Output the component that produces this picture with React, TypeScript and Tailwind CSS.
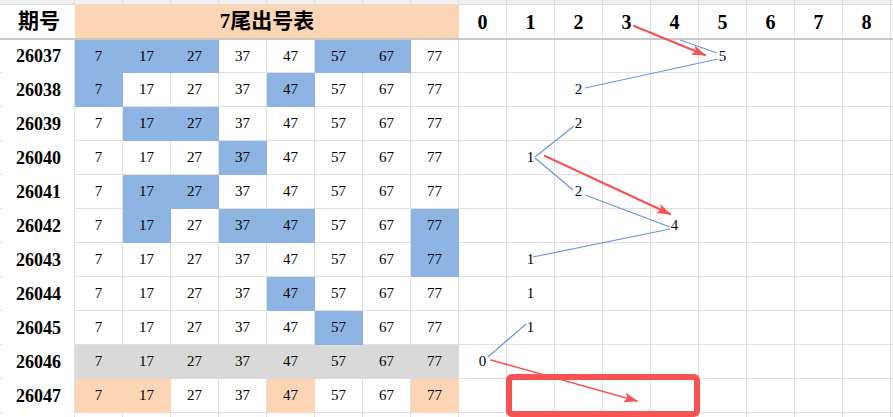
import React from 'react';

type Fill = 'blue' | 'gray' | 'orange';

interface DrawRow {
    id: string;
    hits: number[];
    fill: Fill;
    value: number | null;
}

const tails = ['7', '17', '27', '37', '47', '57', '67', '77'];
const digits = [0, 1, 2, 3, 4, 5, 6, 7, 8];

const rows: DrawRow[] = [
    { id: '26037', hits: [0, 1, 2, 5, 6], fill: 'blue', value: 5 },
    { id: '26038', hits: [0, 4], fill: 'blue', value: 2 },
    { id: '26039', hits: [1, 2], fill: 'blue', value: 2 },
    { id: '26040', hits: [3], fill: 'blue', value: 1 },
    { id: '26041', hits: [1, 2], fill: 'blue', value: 2 },
    { id: '26042', hits: [1, 3, 4, 7], fill: 'blue', value: 4 },
    { id: '26043', hits: [7], fill: 'blue', value: 1 },
    { id: '26044', hits: [4], fill: 'blue', value: 1 },
    { id: '26045', hits: [5], fill: 'blue', value: 1 },
    { id: '26046', hits: [0, 1, 2, 3, 4, 5, 6, 7], fill: 'gray', value: 0 },
    { id: '26047', hits: [0, 1, 4, 7], fill: 'orange', value: null },
];

const fillClass: Record<Fill, string> = {
    blue: 'bg-[#8db4e2] border-[#8db4e2]',
    gray: 'bg-[#d9d9d9] border-[#d9d9d9]',
    orange: 'bg-[#fcd5b4] border-[#fcd5b4]',
};

const serif = { fontFamily: '"Liberation Serif", "Noto Sans CJK SC", serif' };

function Overlay() {
    return (
        <svg className="absolute inset-0 pointer-events-none" width={893} height={417} viewBox="0 0 893 417">
            <defs>
                <marker id="head" viewBox="0 0 14 10" markerUnits="userSpaceOnUse" markerWidth={14} markerHeight={10} refX={13} refY={5} orient="auto">
                    <path d="M0,0 L14,5 L0,10 L3,5 z" fill="#f85353" />
                </marker>
            </defs>
            {/* trend line */}
            <g stroke="#6b97d6" strokeWidth={1.2} fill="none">
                <line x1={680} y1={40} x2={717} y2={53} />
                <line x1={718} y1={59} x2={585} y2={88} />
                <line x1={574} y1={126} x2={535} y2={157} />
                <line x1={535} y1={158} x2={573} y2={190} />
                <line x1={585} y1={195} x2={670} y2={227} />
                <line x1={670} y1={229} x2={533} y2={257} />
                <line x1={526} y1={324} x2={488} y2={357} />
            </g>
            {/* red marks */}
            <g stroke="#f85353" fill="none" strokeLinecap="round">
                <line x1={634} y1={26} x2={705} y2={55} strokeWidth={2.2} markerEnd="url(#head)" />
                <line x1={545} y1={156} x2={670} y2={214} strokeWidth={2.2} markerEnd="url(#head)" />
                <line x1={491} y1={360} x2={637} y2={401} strokeWidth={1.6} markerEnd="url(#head)" />
                <rect x={509} y={377} width={188} height={37} rx={3} strokeWidth={6} />
            </g>
        </svg>
    );
}

export default function App() {
    return (
        <div className="relative w-[893px] h-[417px] overflow-hidden bg-white text-black" style={serif}>
            {/* sliver of the row above */}
            <div className="flex h-[5px] bg-[#f0f0f0] border-b border-[#dcdcdc]">
                <div className="w-[75px] shrink-0 border-r border-[#dcdcdc]" />
                {tails.concat(tails, ['', '']).map((_, i) => (
                    <div key={i} className="w-[48px] shrink-0 border-r border-[#dcdcdc]" />
                ))}
                <div className="flex-1" />
            </div>

            {/* header */}
            <div className="flex h-[35px] border-b-2 border-[#c8c8c8]">
                <div className="w-[3px] shrink-0" />
                <div className="w-[72px] shrink-0 flex items-center justify-center text-[21px] font-bold bg-white">
                    期号
                </div>
                <div className="w-[384px] shrink-0 flex items-center justify-center text-[21px] font-bold bg-[#fcd5b4]">
                    7尾出号表
                </div>
                {digits.map((d) => (
                    <div key={d} className="w-[48px] shrink-0 flex items-center justify-center text-[20px] font-bold border-r border-[#e0e0e0]">
                        {d}
                    </div>
                ))}
                <div className="flex-1" />
            </div>

            {/* body */}
            {rows.map((row, ri) => (
                <div key={row.id} className={`flex ${ri === 0 ? 'h-[33px]' : 'h-[34px]'}`}>
                    <div className="w-[3px] shrink-0 border-b border-[#e0e0e0]" />
                    <div className="w-[72px] shrink-0 flex items-center justify-center text-[18px] font-bold bg-white border-r border-[#e0e0e0]">
                        {row.id}
                    </div>
                    {tails.map((t, ci) => {
                        const hit = row.hits.includes(ci);
                        return (
                            <div
                                key={t}
                                className={`w-[48px] shrink-0 flex items-center justify-center text-[15px] border-r border-b ${hit ? fillClass[row.fill] : 'border-[#e0e0e0]'}`}
                            >
                                {t}
                            </div>
                        );
                    })}
                    {digits.map((d) => (
                        <div key={d} className="w-[48px] shrink-0 flex items-center justify-center text-[15px] border-r border-b border-[#e0e0e0]">
                            {row.value === d ? d : ''}
                        </div>
                    ))}
                    <div className="flex-1 border-b border-[#e0e0e0]" />
                </div>
            ))}

            {/* next row peeking in */}
            <div className="flex h-[4px]">
                <div className="w-[75px] shrink-0 border-r border-[#e0e0e0]" />
                {tails.concat(tails, ['', '']).map((_, i) => (
                    <div key={i} className="w-[48px] shrink-0 border-r border-[#e0e0e0]" />
                ))}
            </div>

            <Overlay />
        </div>
    );
}
